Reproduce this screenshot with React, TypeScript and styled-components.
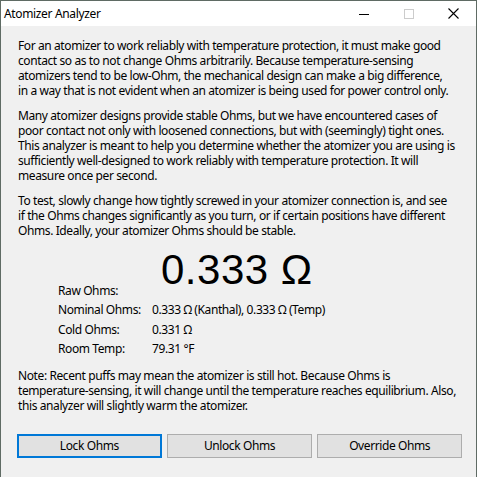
import React from "react";
import styled, { createGlobalStyle } from "styled-components";

const GlobalStyle = createGlobalStyle`
  html, body {
    margin: 0;
    padding: 0;
    background: #ffffff;
  }
  body {
    font-family: "Noto Sans", "Open Sans", sans-serif;
    font-size: 12px;
    color: #000;
  }
`;

const intro: string[][] = [
  [
    "For an atomizer to work reliably with temperature protection, it must make good",
    "contact so as to not change Ohms arbitrarily. Because temperature-sensing",
    "atomizers tend to be low-Ohm, the mechanical design can make a big difference,",
    "in a way that is not evident when an atomizer is being used for power control only.",
  ],
  [
    "Many atomizer designs provide stable Ohms, but we have encountered cases of",
    "poor contact not only with loosened connections, but with (seemingly) tight ones.",
    "This analyzer is meant to help you determine whether the atomizer you are using is",
    "sufficiently well-designed to work reliably with temperature protection. It will",
    "measure once per second.",
  ],
  [
    "To test, slowly change how tightly screwed in your atomizer connection is, and see",
    "if the Ohms changes significantly as you turn, or if certain positions have different",
    "Ohms. Ideally, your atomizer Ohms should be stable.",
  ],
];

const note = [
  "Note: Recent puffs may mean the atomizer is still hot. Because Ohms is",
  "temperature-sensing, it will change until the temperature reaches equilibrium. Also,",
  "this analyzer will slightly warm the atomizer.",
];

const readings = [
  { label: "Nominal Ohms:", value: "0.333 Ω (Kanthal), 0.333 Ω (Temp)" },
  { label: "Cold Ohms:", value: "0.331 Ω" },
  { label: "Room Temp:", value: "79.31 °F" },
];

export default function App() {
  return (
    <>
      <GlobalStyle />
      <Window>
        <TitleBar>
          <Caption>Atomizer Analyzer</Caption>
          <CaptionButtons>
            <CaptionButton>
              <svg width="10" height="10" viewBox="0 0 10 10">
                <path d="M0 5.5 H10" stroke="#000" strokeWidth="1" />
              </svg>
            </CaptionButton>
            <CaptionButton>
              <svg width="10" height="10" viewBox="0 0 10 10">
                <rect x="0.5" y="0.5" width="9" height="9" fill="none" stroke="#cccccc" strokeWidth="1" />
              </svg>
            </CaptionButton>
            <CaptionButton>
              <svg width="11" height="11" viewBox="0 0 11 11">
                <path d="M0.5 0.5 L10.5 10.5 M10.5 0.5 L0.5 10.5" stroke="#000" strokeWidth="1.1" />
              </svg>
            </CaptionButton>
          </CaptionButtons>
        </TitleBar>
        <Body>
          {intro.map((para, i) => (
            <Paragraph key={i}>
              {para.map((line) => (
                <Line key={line}>{line}</Line>
              ))}
            </Paragraph>
          ))}

          <Readings>
            <Label>Raw Ohms:</Label>
            <BigValue>0.333 Ω</BigValue>
            {readings.map((r) => (
              <React.Fragment key={r.label}>
                <Label>{r.label}</Label>
                <Value>{r.value}</Value>
              </React.Fragment>
            ))}
          </Readings>

          <Paragraph>
            {note.map((line) => (
              <Line key={line}>{line}</Line>
            ))}
          </Paragraph>

          <Buttons>
            <Button $focused>Lock Ohms</Button>
            <Button>Unlock Ohms</Button>
            <Button>Override Ohms</Button>
          </Buttons>
        </Body>
      </Window>
    </>
  );
}

const Window = styled.div`
  width: 477px;
  height: 477px;
  box-sizing: border-box;
  border: 1px solid #5f6b64;
  border-bottom: none;
  display: flex;
  flex-direction: column;
  overflow: hidden;
`;

const TitleBar = styled.div`
  height: 25px;
  flex: none;
  background: #ffffff;
  display: flex;
  align-items: center;
  justify-content: space-between;
`;

const Caption = styled.div`
  padding-left: 3px;
  font-size: 12px;
  letter-spacing: -0.35px;
  line-height: 25px;
`;

const CaptionButtons = styled.div`
  display: flex;
  height: 100%;
`;

const CaptionButton = styled.div`
  width: 45px;
  height: 100%;
  display: flex;
  align-items: center;
  justify-content: center;
`;

const Body = styled.div`
  flex: 1;
  background: #f0f0f0;
  padding: 12px 15px 0 17px;
  letter-spacing: -0.4px;
`;

const Paragraph = styled.div`
  margin-bottom: 10px;
  line-height: 15px;
`;

const Line = styled.div`
  white-space: nowrap;
`;

const Readings = styled.div`
  display: grid;
  grid-template-columns: 94px auto;
  align-items: end;
  padding-left: 40px;
  margin: 4px 0 9px;
  line-height: 19.5px;
`;

const BigValue = styled.div`
  font-family: "Liberation Sans", Arial, sans-serif;
  font-size: 42px;
  line-height: 44px;
  letter-spacing: 0.5px;
  padding-left: 9px;
  margin-bottom: 8px;
`;

const Label = styled.div``;

const Value = styled.div``;

const Buttons = styled.div`
  display: grid;
  grid-template-columns: repeat(3, 1fr);
  column-gap: 5.5px;
  margin: 21px -1px 0 -1px;
`;

const Button = styled.button<{ $focused?: boolean }>`
  height: 24px;
  margin: 0;
  padding: 0;
  font-family: inherit;
  font-size: 12px;
  letter-spacing: -0.4px;
  color: #000;
  background: #e1e1e1;
  box-sizing: border-box;
  border: ${(p) => (p.$focused ? "2px solid #0078d7" : "1px solid #adadad")};
  border-radius: 0;
`;
